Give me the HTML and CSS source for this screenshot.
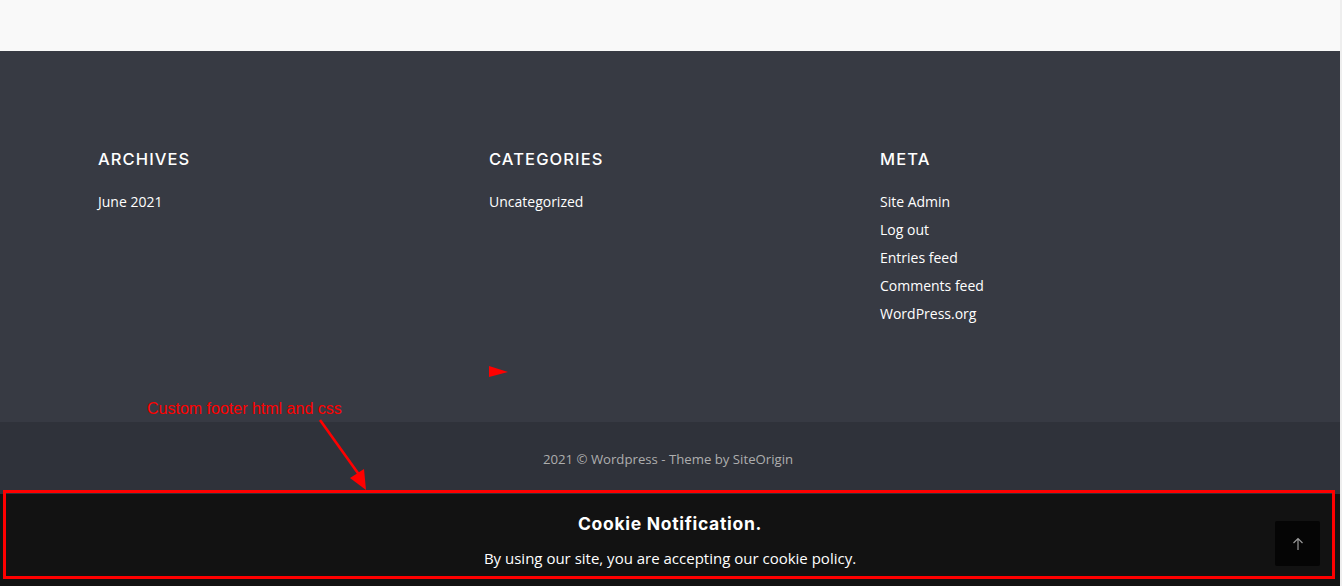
FILE: index.html
```html
<!DOCTYPE html>
<html>
<head>
<meta charset="utf-8">
<link rel="stylesheet" href="styles.css">
</head>
<body>
<div class="page">
  <header class="topbar"></header>
  <footer class="site-footer">
    <div class="widgets">
      <section class="widget">
        <h3 class="widget-title">ARCHIVES</h3>
        <ul class="widget-list"><li>June 2021</li></ul>
      </section>
      <section class="widget">
        <h3 class="widget-title">CATEGORIES</h3>
        <ul class="widget-list"><li>Uncategorized</li></ul>
      </section>
      <section class="widget">
        <h3 class="widget-title">META</h3>
        <ul class="widget-list">
          <li>Site Admin</li>
          <li>Log out</li>
          <li>Entries feed</li>
          <li>Comments feed</li>
          <li>WordPress.org</li>
        </ul>
      </section>
    </div>
    <div class="bottom-bar">2021 © Wordpress - Theme by SiteOrigin</div>
  </footer>
  <div class="cookie">
    <div class="cookie-title">Cookie Notification.</div>
    <div class="cookie-text">By using our site, you are accepting our cookie policy.</div>
    <button class="to-top" aria-label="Back to top">
      <svg width="12" height="14" viewBox="0 0 12 14"><path d="M6 13V1.5M1.5 6L6 1.5 10.5 6" fill="none" stroke="#9a9a9a" stroke-width="1.2"/></svg>
    </button>
  </div>
  <div class="note-text">Custom footer html and css</div>
  <svg class="note-arrow" width="60" height="75" viewBox="0 0 60 75">
    <line x1="2" y1="2" x2="42" y2="58" stroke="#ff0000" stroke-width="2.6"/>
    <polygon points="32,60 48,72 46,51" fill="#ff0000"/>
  </svg>
  <svg class="note-tri" width="20" height="12" viewBox="0 0 20 12"><polygon points="0,0 0,11 19,6" fill="#ff0000"/></svg>
  <div class="note-rect"></div>
</div>
</body>
</html>
```
FILE: styles.css
```css
html, body { margin: 0; padding: 0; }
body {
  background: #121212;
  font-family: "Open Sans", "Liberation Sans", sans-serif;
  overflow: hidden;
}
.page {
  position: relative;
  width: 1340px;
  height: 586px;
  border-right: 2px solid #eeeeee;
  background: #121212;
}
.topbar { height: 51px; background: #f9f9f9; }
.site-footer { background: #373a43; }
.widgets {
  display: grid;
  grid-template-columns: 391px 391px 391px;
  padding: 98px 0 0 98px;
  height: 273px;
}
.widget-title {
  margin: 0 0 19px;
  font-family: "Inter", "Liberation Sans", sans-serif;
  font-weight: 500;
  font-size: 16.5px;
  letter-spacing: 1.1px;
  color: #ffffff;
  line-height: 20px;
}
.widget-list { list-style: none; margin: 0; padding: 0; }
.widget-list li {
  color: #ffffff;
  font-size: 14px;
  line-height: 28px;
}
.bottom-bar {
  background: #2f323a;
  height: 72px;
  padding-right: 4px;
  text-align: center;
  color: #aeaeae;
  font-size: 13.2px;
  line-height: 74px;
}
.cookie {
  position: absolute;
  left: 0; right: 0; bottom: 0;
  height: 91px;
  background: #121212;
  text-align: center;
  color: #ffffff;
}
.cookie-title {
  font-family: "Inter", "Liberation Sans", sans-serif;
  font-weight: 700;
  font-size: 17.5px;
  letter-spacing: 0.7px;
  padding-top: 18px;
  line-height: 22px;
}
.cookie-text {
  font-size: 15px;
  line-height: 20px;
  margin-top: 13px;
}
.to-top {
  position: absolute;
  right: 20px;
  top: 26px;
  width: 45px;
  height: 45px;
  border: 0;
  border-radius: 2px;
  background: #050505;
  display: flex;
  align-items: center;
  justify-content: center;
  padding: 0;
}
.note-text {
  position: absolute;
  left: 147px;
  top: 400px;
  font-family: "Liberation Sans", Arial, sans-serif;
  font-size: 16px;
  color: #ff0000;
}
.note-arrow { position: absolute; left: 318px; top: 418px; }
.note-tri { position: absolute; left: 489px; top: 366px; }
.note-rect {
  position: absolute;
  left: 3px; top: 490px;
  width: 1326px; height: 83px;
  border: 3px solid #ff0000;
}
```
